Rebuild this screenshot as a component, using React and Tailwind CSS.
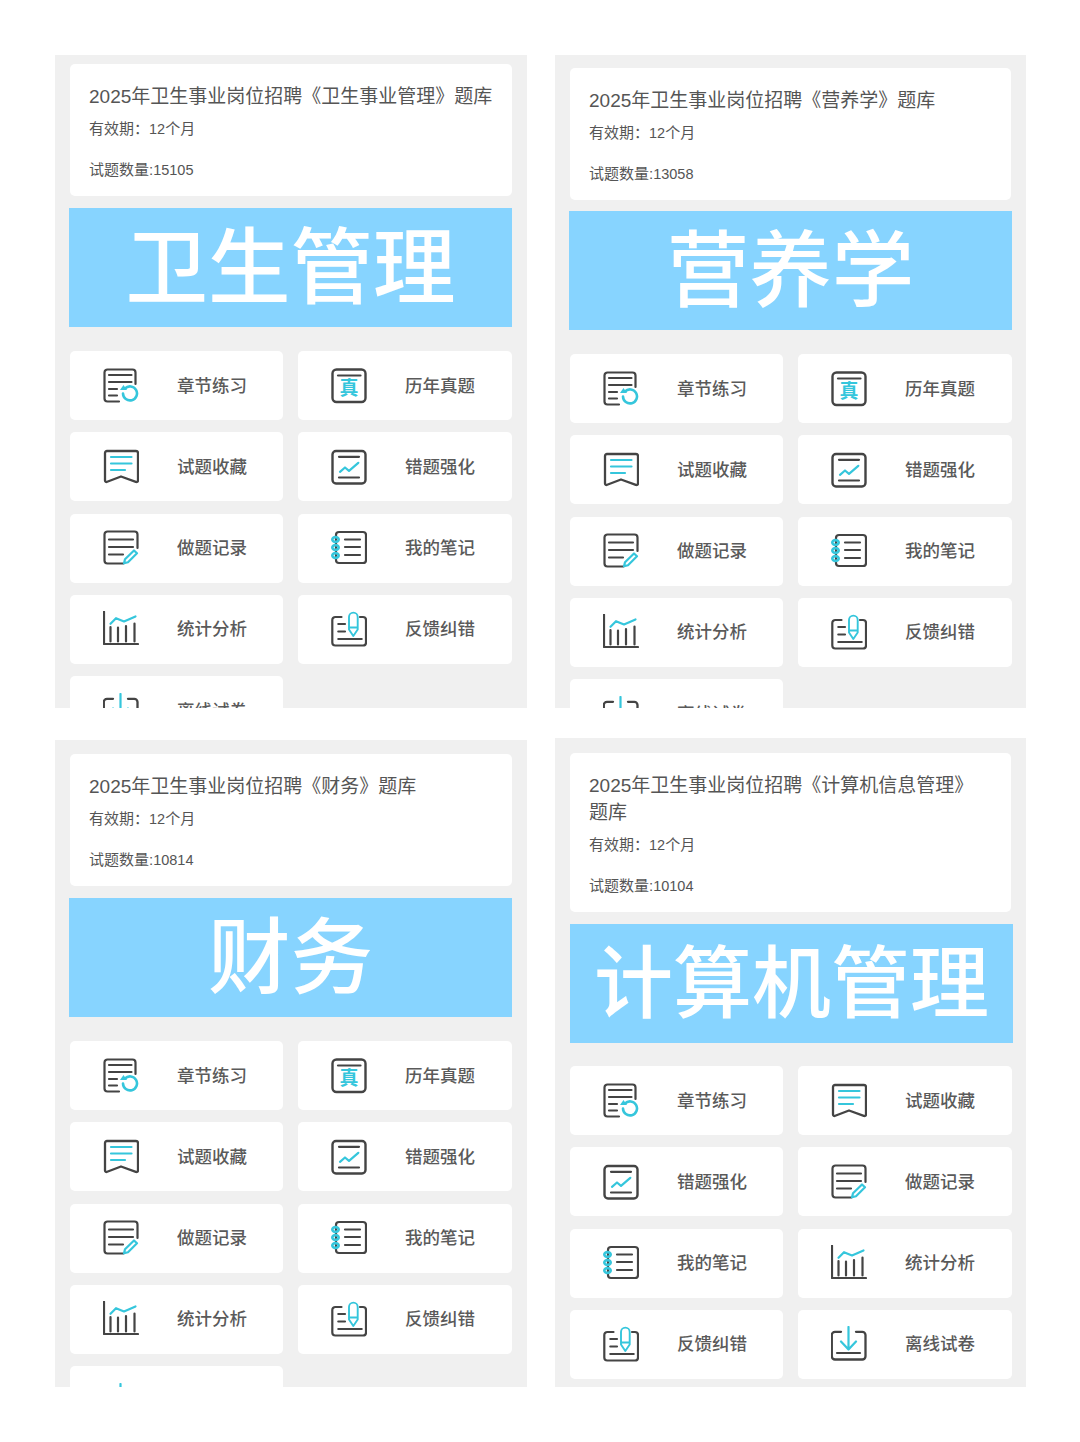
const D = '#444444';
const C = '#35c6dc';
const SD = 2.2;
const SC = 2.2;

function Svg({ children }) {
  return (
    <svg width="36" height="36" viewBox="0 0 36 36" fill="none" strokeLinecap="round" strokeLinejoin="round" className="shrink-0">
      {children}
    </svg>
  );
}

const icons = {
  chapter: (
    <Svg>
      <path d="M16 33.5H4.5a3 3 0 0 1-3-3v-26a3 3 0 0 1 3-3h25a3 3 0 0 1 3 3V16" stroke={D} strokeWidth={SD} />
      <path d="M6 7h22.5M6 14h22.5M6 21h8M6 27.5h8" stroke={D} strokeWidth={SD} />
      <path d="M22 20.5a7 7 0 1 1-2 5" stroke={C} strokeWidth="2.6" />
      <path d="M17 22h7l-3.5-5z" fill={C} />
    </Svg>
  ),
  real: (
    <Svg>
      <rect x="1.5" y="1.5" width="33" height="32.5" rx="4" stroke={D} strokeWidth="2.4" />
      <path d="M7 7.5h22.5" stroke={D} strokeWidth={SD} />
      <text x="18" y="27" textAnchor="middle" fontSize="19" fontWeight="700" fill={C} fontFamily="'Noto Sans CJK SC', sans-serif">真</text>
    </Svg>
  ),
  fav: (
    <Svg>
      <path d="M4 2h29a2 2 0 0 1 2 2v27.5c0 1.2-1 1.8-2.2 1.3L18 27.5 4.2 32.8C3 33.3 2 32.7 2 31.5V4a2 2 0 0 1 2-2z" stroke={D} strokeWidth="2.3" />
      <path d="M8 8h20.5M8 14.5h20.5M8 21h14" stroke={C} strokeWidth={SC} />
    </Svg>
  ),
  wrong: (
    <Svg>
      <rect x="1.5" y="2" width="33" height="32.5" rx="3.5" stroke={D} strokeWidth="2.4" />
      <path d="M8 7.8h20M8 28.5h20" stroke={D} strokeWidth={SD} />
      <path d="M9 22.8l5-4.3 4 3.3 9.3-8" stroke={C} strokeWidth={SC} />
    </Svg>
  ),
  record: (
    <Svg>
      <path d="M20.5 33.5H4.5a3 3 0 0 1-3-3v-26a3 3 0 0 1 3-3h27a3 3 0 0 1 3 3V18" stroke={D} strokeWidth={SD} />
      <path d="M6 9.5h24M6 17h24M6 24.5h14" stroke={D} strokeWidth={SD} />
      <path d="M31 20.5l3 2.8-9 9-4 1 1-4z" stroke={C} strokeWidth={SC} />
    </Svg>
  ),
  note: (
    <Svg>
      <path d="M5 5a3 3 0 0 1 3-3h24a3 3 0 0 1 3 3v25a3 3 0 0 1-3 3H8a3 3 0 0 1-3-3z" stroke={D} strokeWidth={SD} />
      <path d="M14 9.5h15M14 17h15M14 25h15" stroke={D} strokeWidth={SD} />
      <ellipse cx="4.5" cy="9.5" rx="3.2" ry="2.4" stroke={C} strokeWidth="2.6" />
      <ellipse cx="4.5" cy="17.5" rx="3.2" ry="2.4" stroke={C} strokeWidth="2.6" />
      <ellipse cx="4.5" cy="25.5" rx="3.2" ry="2.4" stroke={C} strokeWidth="2.6" />
    </Svg>
  ),
  stats: (
    <Svg>
      <path d="M1 .8V33h34" stroke={D} strokeWidth={SD} />
      <path d="M7.5 16v14.5M15 16.5v14M23 15v15.5M31.5 12.5v18" stroke={D} strokeWidth={SD} />
      <path d="M7.5 12.8L13 7.2l8 3.3 11.5-5" stroke={C} strokeWidth={SC} />
    </Svg>
  ),
  feedback: (
    <Svg>
      <path d="M10.5 6H4.3a3 3 0 0 0-3 3v22.5a3 3 0 0 0 3 3H32a3 3 0 0 0 3-3V9a3 3 0 0 0-3-3h-3" stroke={D} strokeWidth={SD} />
      <path d="M7.3 13H14M7.3 20.5H14M7.3 28h23.4" stroke={D} strokeWidth={SD} />
      <path d="M18 6a4.3 4.3 0 0 1 8.7 0v12.5L22.3 25 18 18.5zM18 16.5h8.7" stroke={C} strokeWidth="1.9" />
    </Svg>
  ),
  offline: (
    <Svg>
      <path d="M10 5.8H4a3.2 3.2 0 0 0-3.2 3.2v21.3A3.2 3.2 0 0 0 4 33.5h27.3a3.2 3.2 0 0 0 3.2-3.2V9a3.2 3.2 0 0 0-3.2-3.2H25" stroke={D} strokeWidth="2.3" />
      <path d="M6 27h23" stroke={D} strokeWidth={SD} />
      <path d="M17.5 1v22.5M10 15.5l7.5 8 7.5-8" stroke={C} strokeWidth={SC} />
    </Svg>
  ),
};

const L = {
  chapter: '章节练习', real: '历年真题', fav: '试题收藏', wrong: '错题强化', record: '做题记录',
  note: '我的笔记', stats: '统计分析', feedback: '反馈纠错', offline: '离线试卷',
};

function Item({ k }) {
  return (
    <div className="flex h-[69px] items-center rounded-[5px] bg-white pl-[33px]">
      {icons[k]}
      <span className="ml-[38px] text-[17.5px] leading-6 font-medium whitespace-nowrap text-[#5a5a5a]">{L[k]}</span>
    </div>
  );
}

function Panel({ h, pt, title, count, banner, size, items, shift, gap }) {
  return (
    <div className={`overflow-hidden bg-[#f0f0f0] px-[15px] ${h} ${pt}`}>
      <div className="rounded-[5px] bg-white pt-[19px] pr-[16px] pb-[14px] pl-[19px] text-[#555555]">
        <div className="text-[19px] leading-[27px] whitespace-pre-line">{title}</div>
        <div className="mt-[7px] text-[15px] leading-6">
          {'有效期\uFF1A'}<span className="text-[14.5px]">12</span>个月
        </div>
        <div className="mt-[17px] text-[15px] leading-6">
          试题数量:<span className="text-[14.5px]">{count}</span>
        </div>
      </div>
      <div className={`flex h-[119px] w-[443px] items-center justify-center bg-[#87d4ff] pt-[3px] font-medium whitespace-nowrap text-white ${size} ${shift} ${gap}`}>
        {banner}
      </div>
      <div className="grid grid-cols-[213px_214px] gap-x-[15px] gap-y-[12.25px]">
        {items.map((k) => (
          <Item key={k} k={k} />
        ))}
      </div>
    </div>
  );
}

const full = ['chapter', 'real', 'fav', 'wrong', 'record', 'note', 'stats', 'feedback', 'offline'];
const noReal = ['chapter', 'fav', 'wrong', 'record', 'note', 'stats', 'feedback', 'offline'];

export default function App() {
  return (
    <div className="flex h-[1442px] w-[1080px] gap-x-[28px] bg-white px-[55px] pt-[55px] font-['Liberation_Sans','Noto_Sans_CJK_SC',sans-serif]">
      <div className="flex w-[472px] flex-col gap-y-[32px]">
        <Panel h="h-[653px]" pt="pt-[9px]" title="2025年卫生事业岗位招聘《卫生事业管理》题库" count="15105" banner="卫生管理" size="text-[82.5px]" items={full} shift="-ml-px" gap="mt-3 mb-6" />
        <Panel h="h-[647px]" pt="pt-[14px]" title="2025年卫生事业岗位招聘《财务》题库" count="10814" banner="财务" size="text-[82.5px]" items={full} shift="-ml-px" gap="mt-3 mb-6" />
      </div>
      <div className="flex w-[471px] flex-col gap-y-[30px]">
        <Panel h="h-[653px]" pt="pt-[13px]" title="2025年卫生事业岗位招聘《营养学》题库" count="13058" banner="营养学" size="text-[82.5px]" items={full} shift="-ml-px" gap="mt-[11px] mb-6" />
        <Panel h="h-[649px]" pt="pt-[15px]" title={'2025年卫生事业岗位招聘《计算机信息管理》\n题库'} count="10104" banner="计算机管理" size="text-[79px]" items={noReal} shift="" gap="mt-3 mb-[23px]" />
      </div>
    </div>
  );
}
